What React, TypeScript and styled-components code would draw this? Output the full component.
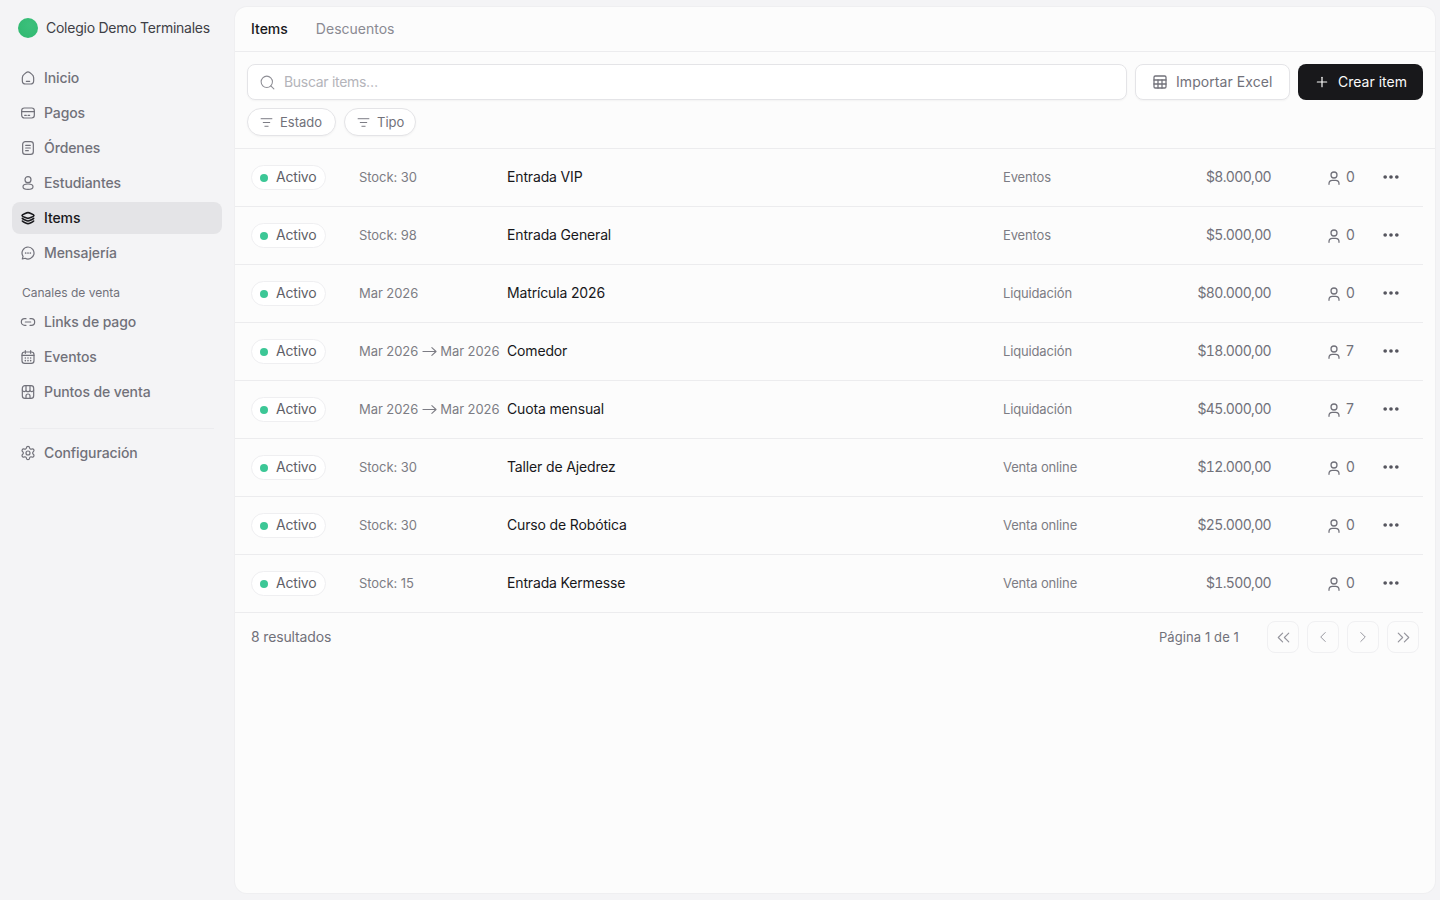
import React from 'react';
import styled, { createGlobalStyle } from 'styled-components';
import {
  ChevronLeft,
  ChevronRight,
  ChevronsLeft,
  ChevronsRight,
  Ellipsis,
  Link2,
  ListFilter,
  Plus,
  Search,
  Settings,
  Sheet,
} from 'lucide-react';

const GlobalStyle = createGlobalStyle`
  html, body {
    margin: 0;
    padding: 0;
    height: 100%;
    background: #f4f4f6;
    font-family: 'Inter', 'Liberation Sans', sans-serif;
    color: #18181b;
  }
  * { box-sizing: border-box; }
`;

const Shell = styled.div`
  display: flex;
  width: 1440px;
  height: 900px;
  overflow: hidden;
  background: #f4f4f6;
`;

const Sidebar = styled.aside`
  flex: 0 0 235px;
  display: flex;
  flex-direction: column;
  padding: 0 13px 0 12px;
`;

const Brand = styled.div`
  display: flex;
  align-items: center;
  gap: 8px;
  height: 56px;
  padding-left: 6px;
  font-size: 14px;
  line-height: 16px;
  letter-spacing: -0.25px;
  color: #3f3f46;
  white-space: nowrap;
`;

const BrandDot = styled.span`
  width: 20px;
  height: 20px;
  border-radius: 50%;
  background: radial-gradient(circle at 60% 35%, #3cc07c, #2fb86f);
`;

const NavList = styled.nav`
  display: flex;
  flex-direction: column;
  gap: 3px;
  margin-top: 6px;
`;

const NavItem = styled.a<{ $active?: boolean }>`
  display: flex;
  align-items: center;
  gap: 8px;
  height: 32px;
  padding-left: 8px;
  border-radius: 8px;
  font-size: 14px;
  line-height: 16px;
  font-weight: 500;
  letter-spacing: -0.1px;
  color: ${(p) => (p.$active ? '#18181b' : '#71717a')};
  background: ${(p) => (p.$active ? '#e4e4e7' : 'transparent')};

  svg {
    width: 16px;
    height: 16px;
    stroke-width: ${(p) => (p.$active ? 2.4 : 1.8)};
    flex-shrink: 0;
  }
`;

const SectionLabel = styled.div`
  font-size: 12px;
  line-height: 16px;
  color: #71717a;
  padding-left: 10px;
  margin: 13px 0 2px;
`;

const NavDivider = styled.div`
  height: 1px;
  margin: 17px 8px 5px;
  background: #ececef;
`;

const Main = styled.main`
  width: 1200px;
  height: 886px;
  margin-top: 7px;
  background: #fcfcfc;
  border-radius: 12px;
  box-shadow: 0 0 0 1px #efeff1;
  display: flex;
  flex-direction: column;
  overflow: hidden;
`;

const Tabs = styled.div`
  display: flex;
  align-items: center;
  gap: 28px;
  height: 45px;
  padding: 0 16px;
  border-bottom: 1px solid #ececee;
  line-height: 16px;
`;

const Tab = styled.span<{ $active?: boolean }>`
  font-size: 14px;
  font-weight: ${(p) => (p.$active ? 500 : 400)};
  color: ${(p) => (p.$active ? '#18181b' : '#8a8a92')};
`;

const Controls = styled.div`
  display: flex;
  flex-direction: column;
  gap: 8px;
  padding: 12px;
  border-bottom: 1px solid #ececee;
`;

const ToolRow = styled.div`
  display: flex;
  gap: 8px;
  height: 36px;
`;

const SearchBox = styled.div`
  flex: 1;
  display: flex;
  align-items: center;
  gap: 8px;
  padding-left: 11px;
  background: #fff;
  border: 1px solid #e4e4e7;
  border-radius: 8px;
  box-shadow: 0 1px 2px rgba(0, 0, 0, 0.04);
  font-size: 14px;
  line-height: 16px;
  letter-spacing: -0.3px;
  color: #b4b4ba;

  svg {
    width: 17px;
    height: 17px;
    color: #8f8f96;
    stroke-width: 1.5;
  }
`;

const OutlineButton = styled.button`
  display: flex;
  align-items: center;
  gap: 8px;
  width: 155px;
  padding: 0 0 0 16px;
  background: #fff;
  border: 1px solid #e4e4e7;
  border-radius: 8px;
  box-shadow: 0 1px 2px rgba(0, 0, 0, 0.04);
  font: inherit;
  font-size: 14px;
  line-height: 16px;
  letter-spacing: 0.07px;
  font-weight: 400;
  color: #71717a;

  svg {
    width: 16px;
    height: 16px;
    stroke-width: 1.9;
  }
`;

const PrimaryButton = styled.button`
  display: flex;
  align-items: center;
  gap: 8px;
  width: 125px;
  padding: 0 0 0 16px;
  background: #18181b;
  border: none;
  border-radius: 8px;
  font: inherit;
  font-size: 14px;
  line-height: 16px;
  font-weight: 400;
  color: #fafafa;

  svg {
    width: 16px;
    height: 16px;
    stroke-width: 1.8;
  }
`;

const FilterRow = styled.div`
  display: flex;
  gap: 8px;
`;

const FilterChip = styled.button<{ $width: number }>`
  display: flex;
  align-items: center;
  gap: 7px;
  width: ${(p) => p.$width}px;
  height: 28px;
  padding: 0 0 0 12px;
  background: #fff;
  border: 1px solid #e4e4e7;
  border-radius: 14px;
  box-shadow: 0 1px 2px rgba(0, 0, 0, 0.04);
  font: inherit;
  font-size: 13px;
  line-height: 16px;
  font-weight: 400;
  color: #71717a;

  svg {
    width: 13px;
    height: 13px;
    stroke-width: 1.7;
  }
`;

const Rows = styled.div`
  display: flex;
  flex-direction: column;
`;

const Row = styled.div`
  display: grid;
  grid-template-columns: 108px 148px 496px 130px 138px 110px 1fr;
  align-items: center;
  height: 58px;
  margin-right: 12px;
  padding-left: 16px;
  border-bottom: 1px solid #ececee;
  line-height: 15px;
`;

const StatusPill = styled.span`
  display: inline-flex;
  align-items: center;
  gap: 8px;
  width: 75px;
  height: 25px;
  padding: 0 0 2px 8px;
  background: #fff;
  border: 1px solid #efeff1;
  border-radius: 13px;
  font-size: 14px;
  letter-spacing: -0.2px;
  color: #5f5f68;
`;

const StatusDot = styled.span`
  width: 8px;
  height: 8px;
  margin-top: 2px;
  border-radius: 50%;
  background: #3cc796;
`;

const Availability = styled.span`
  display: flex;
  align-items: center;
  gap: 3.5px;
  font-size: 13px;
  letter-spacing: -0.06px;
  color: #7c7c84;
  white-space: nowrap;
`;

const Name = styled.span`
  margin-bottom: 2px;
  font-size: 14px;
  letter-spacing: -0.15px;
  color: #18181b;
`;

const Kind = styled.span`
  font-size: 13px;
  letter-spacing: -0.15px;
  color: #7c7c84;
`;

const Price = styled.span`
  margin-bottom: 2px;
  font-size: 14px;
  text-align: right;
  letter-spacing: -0.66px;
  font-variant-numeric: tabular-nums;
  color: #71717a;
`;

const Buyers = styled.span`
  display: flex;
  align-items: center;
  gap: 4px;
  margin-bottom: 2px;
  padding-left: 55px;
  font-size: 14px;
  color: #71717a;

  svg {
    width: 16px;
    height: 16px;
    stroke-width: 1.9;
    margin-top: 3px;
  }
`;

const MoreButton = styled.span`
  display: flex;
  color: #52525b;

  svg {
    width: 20px;
    height: 20px;
    stroke-width: 2.4;
    margin-bottom: 1px;
  }
`;

const Footer = styled.div`
  display: flex;
  align-items: center;
  height: 48px;
  padding: 0 16px;
  font-size: 13px;
  color: #71717a;
`;

const ResultCount = styled.span`
  margin-bottom: 2px;
  font-size: 14px;
  line-height: 15px;
  letter-spacing: -0.15px;
`;

const PageLabel = styled.span`
  margin-left: auto;
  margin-right: 28px;
  letter-spacing: 0.1px;
`;

const Pager = styled.div`
  display: flex;
  gap: 8px;
`;

const PagerButton = styled.span<{ $double?: boolean }>`
  display: flex;
  align-items: center;
  justify-content: center;
  width: 32px;
  height: 32px;
  border: 1px solid #f0f0f2;
  border-radius: 8px;
  color: #94949c;

  svg {
    width: ${(p) => (p.$double ? 21 : 18)}px;
    height: ${(p) => (p.$double ? 21 : 18)}px;
    stroke-width: 1.3;
  }
`;

const Glyph: React.FC<{ children: React.ReactNode; size?: number }> = ({ children, size = 16 }) => (
  <svg
    viewBox="0 0 24 24"
    width={size}
    height={size}
    fill="none"
    stroke="currentColor"
    strokeLinecap="round"
    strokeLinejoin="round"
  >
    {children}
  </svg>
);

const HomeIcon = () => (
  <Glyph>
    <path d="M3.5 11.5c0-2.6 1-3.8 3-5.3l3-2.3c1.6-1.2 3.4-1.2 5 0l3 2.3c2 1.5 3 2.7 3 5.3v4.5c0 3.2-1.8 5-5 5h-7c-3.2 0-5-1.8-5-5z" />
    <path d="M9.5 17h5" />
  </Glyph>
);

const CardIcon = () => (
  <Glyph>
    <rect x="2.5" y="4.5" width="19" height="15" rx="4" />
    <path d="M2.5 10h19M7 15.5h2.5M12 15.5h2.5" />
  </Glyph>
);

const OrdersIcon = () => (
  <Glyph>
    <rect x="4" y="2.5" width="16" height="19" rx="4" />
    <path d="M8.5 8h7M8.5 12h7M8.5 16h4" />
  </Glyph>
);

const PersonIcon = () => (
  <Glyph>
    <circle cx="12" cy="7" r="4.5" />
    <ellipse cx="12" cy="17.5" rx="7.5" ry="4" />
  </Glyph>
);

const StackIcon = () => (
  <Glyph>
    <path d="M12 4c1.5 0 9 2.5 9 4.2s-7.500 4.300-9 4.300-9-2.600-9-4.300S10.500 4 12 4z" />
    <path d="M3.500 12.500c1.500 1.500 7 4 8.500 4s7-2.500 8.500-4" />
    <path d="M3.500 16.500c1.500 1.500 7 4 8.500 4s7-2.500 8.500-4" />
  </Glyph>
);

const ChatIcon = () => (
  <Glyph>
    <path d="M12 3a9 9 0 1 1-4.3 16.9L3.5 21l1.1-4A9 9 0 0 1 12 3z" />
    <path d="M8.5 12h.01M12 12h.01M15.5 12h.01" strokeWidth="2.6" />
  </Glyph>
);

const CalendarIcon = () => (
  <Glyph>
    <rect x="3" y="4.5" width="18" height="17" rx="4" />
    <path d="M8 2.5v4M16 2.5v4M3 9.5h18" />
    <path d="M8 13.5h.01M12 13.5h.01M16 13.5h.01M8 17.5h.01M12 17.5h.01M16 17.5h.01" strokeWidth="2.4" />
  </Glyph>
);

const StoreIcon = () => (
  <Glyph>
    <rect x="3.5" y="2.5" width="17" height="19" rx="4" />
    <path d="M9 2.5v6a2.8 2.8 0 0 1-5.5.8M15 2.5v6a2.8 2.8 0 0 0 5.5.8M9 8.5a3 3 0 0 0 6 0" />
    <path d="M9 21.5v-3.5a3 3 0 0 1 6 0v3.5" />
  </Glyph>
);

const BuyerIcon = () => (
  <Glyph>
    <circle cx="12" cy="7.5" r="4.5" />
    <path d="M4.5 21.5v-1c0-3 2.2-5 5-5h5c2.8 0 5 2 5 5v1" />
  </Glyph>
);

const RangeArrow = () => (
  <svg viewBox="0 0 16 16" width={15} height={15} fill="none" stroke="currentColor" strokeWidth="1.1" strokeLinecap="round" strokeLinejoin="round">
    <path d="M1 8h14M10.5 3.8 15 8l-4.5 4.2" />
  </svg>
);

type ItemRow = {
  from: string;
  to?: string;
  name: string;
  kind: string;
  price: string;
  buyers: number;
};

const items: ItemRow[] = [
  { from: 'Stock: 30', name: 'Entrada VIP', kind: 'Eventos', price: '$8.000,00', buyers: 0 },
  { from: 'Stock: 98', name: 'Entrada General', kind: 'Eventos', price: '$5.000,00', buyers: 0 },
  { from: 'Mar 2026', name: 'Matrícula 2026', kind: 'Liquidación', price: '$80.000,00', buyers: 0 },
  { from: 'Mar 2026', to: 'Mar 2026', name: 'Comedor', kind: 'Liquidación', price: '$18.000,00', buyers: 7 },
  { from: 'Mar 2026', to: 'Mar 2026', name: 'Cuota mensual', kind: 'Liquidación', price: '$45.000,00', buyers: 7 },
  { from: 'Stock: 30', name: 'Taller de Ajedrez', kind: 'Venta online', price: '$12.000,00', buyers: 0 },
  { from: 'Stock: 30', name: 'Curso de Robótica', kind: 'Venta online', price: '$25.000,00', buyers: 0 },
  { from: 'Stock: 15', name: 'Entrada Kermesse', kind: 'Venta online', price: '$1.500,00', buyers: 0 },
];

const App: React.FC = () => {
  return (
    <Shell>
      <GlobalStyle />
      <Sidebar>
        <Brand>
          <BrandDot />
          Colegio Demo Terminales
        </Brand>
        <NavList>
          <NavItem><HomeIcon />Inicio</NavItem>
          <NavItem><CardIcon />Pagos</NavItem>
          <NavItem><OrdersIcon />Órdenes</NavItem>
          <NavItem><PersonIcon />Estudiantes</NavItem>
          <NavItem $active><StackIcon />Items</NavItem>
          <NavItem><ChatIcon />Mensajería</NavItem>
          <SectionLabel>Canales de venta</SectionLabel>
          <NavItem><Link2 />Links de pago</NavItem>
          <NavItem><CalendarIcon />Eventos</NavItem>
          <NavItem><StoreIcon />Puntos de venta</NavItem>
          <NavDivider />
          <NavItem><Settings />Configuración</NavItem>
        </NavList>
      </Sidebar>
      <Main>
        <Tabs>
          <Tab $active>Items</Tab>
          <Tab>Descuentos</Tab>
        </Tabs>
        <Controls>
          <ToolRow>
            <SearchBox><Search />Buscar items…</SearchBox>
            <OutlineButton><Sheet />Importar Excel</OutlineButton>
            <PrimaryButton><Plus />Crear item</PrimaryButton>
          </ToolRow>
          <FilterRow>
            <FilterChip $width={89}><ListFilter />Estado</FilterChip>
            <FilterChip $width={72}><ListFilter />Tipo</FilterChip>
          </FilterRow>
        </Controls>
        <Rows>
          {items.map((item) => (
            <Row key={item.name}>
              <span><StatusPill><StatusDot />Activo</StatusPill></span>
              <Availability>
                {item.from}
                {item.to && <RangeArrow />}
                {item.to}
              </Availability>
              <Name>{item.name}</Name>
              <Kind>{item.kind}</Kind>
              <Price>{item.price}</Price>
              <Buyers><BuyerIcon />{item.buyers}</Buyers>
              <MoreButton><Ellipsis /></MoreButton>
            </Row>
          ))}
        </Rows>
        <Footer>
          <ResultCount>8 resultados</ResultCount>
          <PageLabel>Página 1 de 1</PageLabel>
          <Pager>
            <PagerButton $double><ChevronsLeft /></PagerButton>
            <PagerButton><ChevronLeft /></PagerButton>
            <PagerButton><ChevronRight /></PagerButton>
            <PagerButton $double><ChevronsRight /></PagerButton>
          </Pager>
        </Footer>
      </Main>
    </Shell>
  );
};

export default App;
